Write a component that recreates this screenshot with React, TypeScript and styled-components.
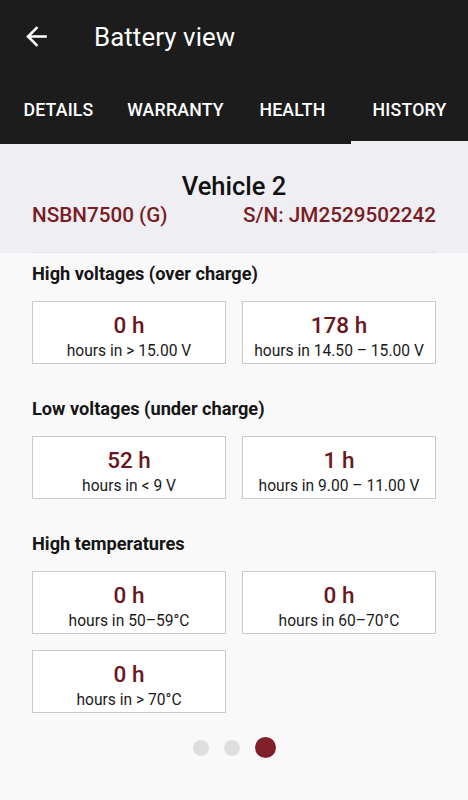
import React from 'react';
import styled, { createGlobalStyle } from 'styled-components';

const GlobalStyle = createGlobalStyle`
	html, body {
		margin: 0;
		padding: 0;
		background-color: #f9f9f9;
		font-family: Roboto, 'Noto Sans', sans-serif;
	}
`;

const sections = [
	{
		title: 'High voltages (over charge)',
		items: [
			{ value: '0 h', label: 'hours in > 15.00 V' },
			{ value: '178 h', label: 'hours in 14.50 – 15.00 V' },
		],
	},
	{
		title: 'Low voltages (under charge)',
		items: [
			{ value: '52 h', label: 'hours in < 9 V' },
			{ value: '1 h', label: 'hours in 9.00 – 11.00 V' },
		],
	},
	{
		title: 'High temperatures',
		items: [
			{ value: '0 h', label: 'hours in 50–59°C' },
			{ value: '0 h', label: 'hours in 60–70°C' },
			{ value: '0 h', label: 'hours in > 70°C' },
		],
	},
];

const tabs = ['Details', 'Warranty', 'Health', 'History'];

const Page = styled.div`
	width: 468px;
	min-height: 800px;
	background-color: #f9f9f9;
`;

const Header = styled.header`
	background-color: #1c1c1c;
`;

const Toolbar = styled.div`
	height: 72px;
	display: flex;
	align-items: center;
`;

const BackButton = styled.div`
	width: 72px;
	height: 72px;
	display: flex;
	align-items: center;
	justify-content: center;
	color: #fff;
`;

const Title = styled.h1`
	margin: 2px 0 0 22px;
	font-size: 25.8px;
	font-weight: 400;
	color: #fff;
	letter-spacing: 0.1px;
`;

const TabBar = styled.nav`
	height: 72px;
	display: grid;
	grid-template-columns: repeat(4, 1fr);
`;

const Tab = styled.div<{ $active?: boolean }>`
	display: flex;
	align-items: center;
	justify-content: center;
	box-sizing: border-box;
	padding-top: 7px;
	border-bottom: 3px solid ${p => (p.$active ? '#f0eff4' : 'transparent')};
	color: #fff;
	font-size: 17.7px;
	font-weight: 500;
	text-transform: uppercase;
	letter-spacing: 0.2px;
`;

const InfoPanel = styled.section`
	background-color: #efeef3;
	padding: 27px 32px 0;
`;

const VehicleName = styled.div`
	text-align: center;
	font-size: 25.5px;
	line-height: 30px;
	font-weight: 500;
	color: #121212;
	margin-bottom: 1px;
`;

const IdRow = styled.div`
	display: flex;
	justify-content: space-between;
	height: 26px;
	line-height: 26px;
	padding-bottom: 24px;
	border-bottom: 1px solid #e3e3e7;
	font-size: 20.7px;
	font-weight: 500;
	color: #7a1c23;
`;

const Content = styled.main`
	padding: 10px 32px 0;
`;

const Section = styled.section`
	& + & {
		margin-top: 34px;
	}
`;

const SectionTitle = styled.h2`
	margin: 0 0 16px;
	font-size: 18.2px;
	line-height: 22px;
	font-weight: 700;
	color: #151515;
`;

const CardGrid = styled.div`
	display: grid;
	grid-template-columns: 1fr 1fr;
	column-gap: 16px;
	row-gap: 16px;
`;

const Card = styled.div`
	height: 63px;
	box-sizing: border-box;
	border: 1px solid #cacaca;
	background-color: #fff;
	display: flex;
	flex-direction: column;
	align-items: center;
	padding-top: 10px;
`;

const CardValue = styled.div`
	font-size: 22.5px;
	line-height: 26px;
	font-weight: 500;
	color: #6b1720;
`;

const CardLabel = styled.div`
	margin-top: 4px;
	font-size: 15.6px;
	line-height: 18px;
	color: #1a1a1a;
`;

const Pager = styled.div`
	display: flex;
	justify-content: center;
	align-items: center;
	gap: 15px;
	margin-top: 24px;
	height: 21px;
`;

const Dot = styled.span<{ $active?: boolean }>`
	width: ${p => (p.$active ? 21 : 16)}px;
	height: ${p => (p.$active ? 21 : 16)}px;
	border-radius: 50%;
	background-color: ${p => (p.$active ? '#7e1f29' : '#dedede')};
`;

const ArrowBack = () => (
	<svg width="31" height="31" viewBox="0 0 24 24" fill="currentColor">
		<path d="M20 11H7.83l5.59-5.59L12 4l-8 8 8 8 1.41-1.41L7.83 13H20v-2z" />
	</svg>
);

export default function App() {
	return (
		<Page>
			<GlobalStyle />
			<Header>
				<Toolbar>
					<BackButton>
						<ArrowBack />
					</BackButton>
					<Title>Battery view</Title>
				</Toolbar>
				<TabBar>
					{tabs.map(tab => (
						<Tab key={tab} $active={tab === 'History'}>
							{tab}
						</Tab>
					))}
				</TabBar>
			</Header>
			<InfoPanel>
				<VehicleName>Vehicle 2</VehicleName>
				<IdRow>
					<span>NSBN7500 (G)</span>
					<span>S/N: JM2529502242</span>
				</IdRow>
			</InfoPanel>
			<Content>
				{sections.map(section => (
					<Section key={section.title}>
						<SectionTitle>{section.title}</SectionTitle>
						<CardGrid>
							{section.items.map(item => (
								<Card key={item.label}>
									<CardValue>{item.value}</CardValue>
									<CardLabel>{item.label}</CardLabel>
								</Card>
							))}
						</CardGrid>
					</Section>
				))}
				<Pager>
					<Dot />
					<Dot />
					<Dot $active />
				</Pager>
			</Content>
		</Page>
	);
}
